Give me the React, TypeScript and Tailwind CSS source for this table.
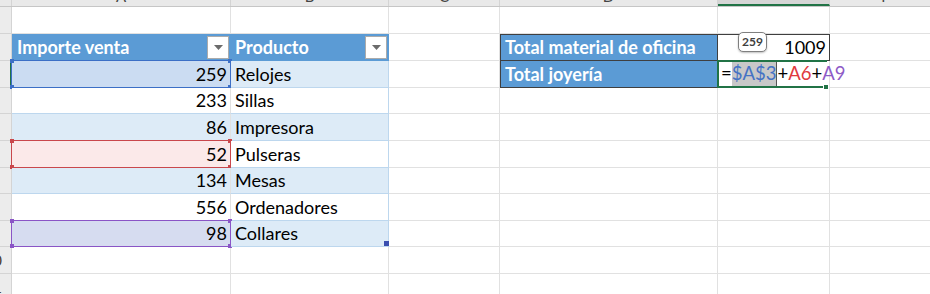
import React from "react";

const GRID = "border-[#e1e1e1]";

function Filter() {
  return (
    <div className="ml-auto mr-[2px] flex h-[23px] w-[22px] items-center justify-center border border-[#ababab] bg-white">
      <svg width="9" height="5" viewBox="0 0 9 5">
        <path d="M0 0h9L4.5 5z" fill="#6b6b6b" />
      </svg>
    </div>
  );
}

function Handles({ color }: { color: string }) {
  // small squares at the corners of a range highlight
  const sq = "absolute h-[4px] w-[4px]";
  return (
    <>
      <span className={`${sq} -left-[2px] -top-[2px]`} style={{ background: color }} />
      <span className={`${sq} -right-[2px] -top-[2px]`} style={{ background: color }} />
      <span className={`${sq} -bottom-[2px] -left-[2px]`} style={{ background: color }} />
      <span className={`${sq} -bottom-[2px] -right-[2px]`} style={{ background: color }} />
    </>
  );
}

function RowHead({ n, active }: { n?: string; active?: boolean }) {
  return (
    <div
      className={`flex w-[12px] shrink-0 items-center justify-end overflow-hidden border-b border-r border-[#d4d4d4] bg-[#ececec] pr-[9px] text-[15px] text-[#4a3a2a] ${
        active ? "border-r-2 border-r-[#217346]" : ""
      }`}
    >
      {n}
    </div>
  );
}

function Empty({ w }: { w: string }) {
  return <div className={`${w} shrink-0 border-b border-r ${GRID}`} />;
}

function NumCell({ v, tone }: { v: string; tone?: "band" | "sel" | "red" | "purple" }) {
  const bg =
    tone === "band"
      ? "bg-[#ddebf7] border-b-[#bdd7ee]"
      : tone === "sel"
      ? "bg-[#cbdcf2] border-b-[#bdd7ee]"
      : tone === "red"
      ? "bg-[#fbe9e9] border-b-[#bdd7ee]"
      : tone === "purple"
      ? "bg-[#d6dcf0] border-b-[#bdd7ee]"
      : "bg-white border-b-[#bdd7ee]";
  const ring =
    tone === "sel" ? "#3c6fc6" : tone === "red" ? "#c9474c" : tone === "purple" ? "#8a55c6" : null;
  return (
    <div className={`relative flex w-[219px] shrink-0 items-center justify-end border-b border-r border-r-[#e1e1e1] pr-[3px] ${bg}`}>
      {v}
      {ring && (
        <div className="pointer-events-none absolute -bottom-[1px] -left-[1px] -top-[1px] right-[-1px] border" style={{ borderColor: ring }}>
          <Handles color={ring} />
        </div>
      )}
    </div>
  );
}

function TextCell({ v, band, corner }: { v: string; band?: boolean; corner?: boolean }) {
  return (
    <div
      className={`relative flex w-[158px] shrink-0 items-center border-b border-r border-b-[#bdd7ee] border-r-[#bdd7ee] pl-[4px] ${
        band ? "bg-[#ddebf7]" : "bg-white"
      }`}
    >
      {v}
      {corner && <span className="absolute -right-[1px] bottom-[0px] h-[5px] w-[5px] bg-[#3b4fb0]" />}
    </div>
  );
}

function Row({ h, children, head, active }: { h: string; children: React.ReactNode; head?: string; active?: boolean }) {
  return (
    <div className={`flex ${h}`}>
      <RowHead n={head} active={active} />
      {children}
      <Empty w="w-[112px]" />
    </div>
  );
}

const data: [string, string, "band" | "sel" | "red" | "purple" | undefined, boolean, string][] = [
  ["233", "Sillas", undefined, false, "h-[26px]"],
  ["86", "Impresora", "band", true, "h-[27px]"],
  ["52", "Pulseras", "red", false, "h-[27px]"],
  ["134", "Mesas", "band", true, "h-[26px]"],
  ["556", "Ordenadores", undefined, false, "h-[27px]"],
];

export default function App() {
  return (
    <div className="h-[294px] w-[930px] overflow-hidden bg-white text-[18px] text-black [font-family:Lato,'Open_Sans',sans-serif]">
      {/* column header strip, only the bottom of the letters shows */}
      <div className="flex h-[7px] border-b border-[#c6c6c6] bg-[#e9e9e9] text-[15px] text-[#444]">
        <div className="w-[12px] shrink-0 border-r border-[#d4d4d4]" />
        {[
          ["A", "w-[219px]"],
          ["B", "w-[158px]"],
          ["C", "w-[111px]"],
          ["D", "w-[218px]"],
          ["E", "w-[112px]"],
          ["F", "w-[112px]"],
        ].map(([l, w]) => (
          <div
            key={l}
            className={`${w} flex shrink-0 items-end justify-center overflow-hidden border-r border-[#d4d4d4] pb-[2px] leading-none ${
              l === "E" ? "border-b-2 border-b-[#217346] bg-[#d6d6d6] text-[#217346]" : ""
            }`}
          >
            {l}
          </div>
        ))}
      </div>

      <Row h="h-[27px]">
        <Empty w="w-[219px]" />
        <Empty w="w-[158px]" />
        <Empty w="w-[111px]" />
        <Empty w="w-[218px]" />
        <Empty w="w-[112px]" />
      </Row>

      {/* table header + right summary */}
      <Row h="h-[27px]">
        <div className="flex w-[219px] shrink-0 items-center bg-[#5b9bd5] pl-[5px] font-bold text-white">
          Importe venta
          <Filter />
        </div>
        <div className="flex w-[158px] shrink-0 items-center bg-[#5b9bd5] pl-[4px] font-bold text-white">
          Producto
          <Filter />
        </div>
        <Empty w="w-[111px]" />
        <div className="flex w-[218px] shrink-0 items-center border border-[#3f3f3f] bg-[#5b9bd5] pl-[4px] font-bold text-white">
          Total material de oficina
        </div>
        <div className="relative flex w-[112px] shrink-0 items-center justify-end border-y border-r border-[#3f3f3f] pr-[3px]">
          1009
          <div className="absolute left-[20px] top-[-3px] flex h-[20px] w-[29px] items-center justify-center rounded-[5px] border border-[#7f7f7f] bg-white text-[12px] font-bold text-[#404040] shadow-[0_1px_2px_rgba(0,0,0,0.25)]">
            259
          </div>
        </div>
      </Row>

      <Row h="h-[27px]" active>
        <NumCell v="259" tone="sel" />
        <TextCell v="Relojes" band />
        <Empty w="w-[111px]" />
        <div className="flex w-[218px] shrink-0 items-center border-x border-b border-[#3f3f3f] bg-[#5b9bd5] pl-[4px] font-bold text-white">
          Total joyería
        </div>
        <div className="relative z-10 flex w-[112px] shrink-0 items-center whitespace-nowrap border-b border-r border-[#e1e1e1] pl-[3px] text-[18.5px]">
          <span>=</span>
          <span className="flex h-full items-center border-r border-[#555] bg-[#c8c8c8] text-[#4472c4]">$A$3</span>
          <span>+</span>
          <span className="text-[#e0393e]">A6</span>
          <span>+</span>
          <span className="text-[#8e5bc7]">A9</span>
          <div className="pointer-events-none absolute -bottom-[1px] -left-[1px] -top-[1px] right-[2px] border-y-2 border-l-2 border-[#217346]" />
          <span className="absolute -bottom-[3px] right-[0px] h-[6px] w-[6px] border border-white bg-[#217346]" />
        </div>
      </Row>

      {data.map(([n, p, tone, band, h]) => (
        <Row key={p} h={h}>
          <NumCell v={n} tone={tone} />
          <TextCell v={p} band={band} />
          <Empty w="w-[111px]" />
          <Empty w="w-[218px]" />
          <Empty w="w-[112px]" />
        </Row>
      ))}

      <Row h="h-[26px]">
        <NumCell v="98" tone="purple" />
        <TextCell v="Collares" band corner />
        <Empty w="w-[111px]" />
        <Empty w="w-[218px]" />
        <Empty w="w-[112px]" />
      </Row>

      <Row h="h-[27px]" head="10">
        <Empty w="w-[219px]" />
        <Empty w="w-[158px]" />
        <Empty w="w-[111px]" />
        <Empty w="w-[218px]" />
        <Empty w="w-[112px]" />
      </Row>
      <Row h="h-[27px]" head="11">
        <Empty w="w-[219px]" />
        <Empty w="w-[158px]" />
        <Empty w="w-[111px]" />
        <Empty w="w-[218px]" />
        <Empty w="w-[112px]" />
      </Row>
    </div>
  );
}
